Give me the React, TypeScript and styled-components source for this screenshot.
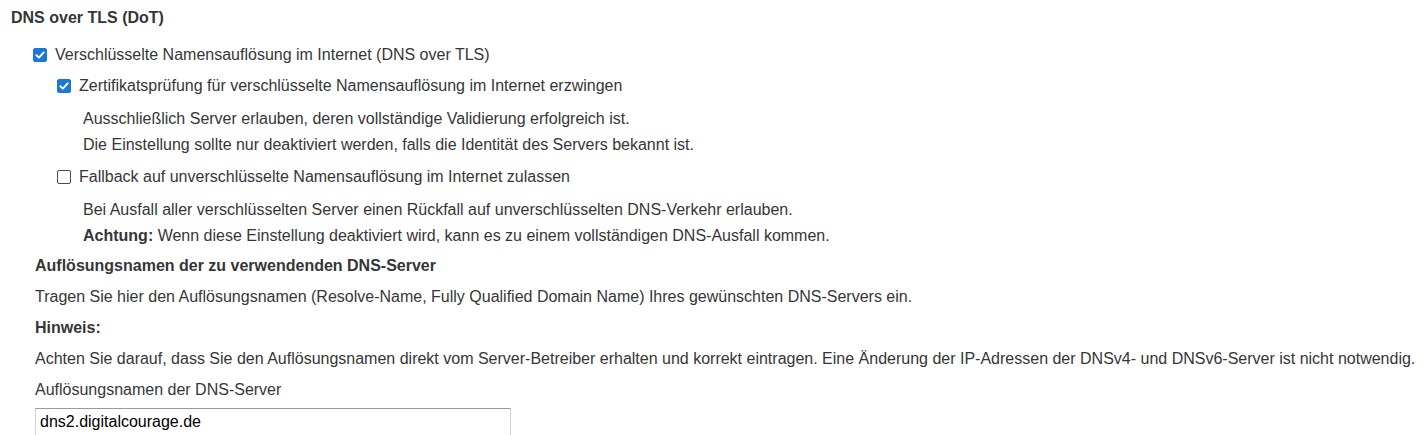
import React, { useState } from "react";
import styled, { createGlobalStyle } from "styled-components";

const GlobalStyle = createGlobalStyle`
  html, body {
    margin: 0;
    padding: 0;
    background: #ffffff;
  }

  body {
    font-family: "Liberation Sans", Arial, sans-serif;
    font-size: 16px;
    color: #363636;
  }
`;

const Page = styled.div`
  box-sizing: border-box;
  width: 1426px;
  height: 435px;
  overflow: hidden;
  padding: 9px 0 0 11px;
`;

const SectionTitle = styled.h3`
  margin: 0 0 15px;

  font-size: 16px;
  font-weight: bold;
  line-height: 18px;
`;

const Block = styled.div<{ $indent?: number }>`
  display: flex;
  flex-direction: column;
  padding-left: ${({ $indent = 0 }) => $indent}px;
`;

const CheckRow = styled.label`
  display: flex;
  align-items: center;
  gap: 8px;
  height: 26px;
  margin-bottom: 5px;

  cursor: pointer;
`;

const Box = styled.span<{ $checked: boolean }>`
  box-sizing: border-box;
  display: inline-flex;
  align-items: center;
  justify-content: center;
  width: 14px;
  height: 14px;
  flex-shrink: 0;

  border-radius: 2px;
  border: 1px solid ${({ $checked }) => ($checked ? "#1b78d6" : "#4a4a4a")};
  background: ${({ $checked }) => ($checked ? "#1b78d6" : "#ffffff")};
`;

const HiddenInput = styled.input`
  display: none;
`;

const Description = styled.div<{ $indent?: number }>`
  display: flex;
  flex-direction: column;
  padding-left: ${({ $indent = 0 }) => $indent}px;
  margin: 2px 0 6px;
`;

const Line = styled.p<{ $bold?: boolean }>`
  margin: 0;
  line-height: 26px;
  font-weight: ${({ $bold }) => ($bold ? "bold" : "normal")};
  white-space: nowrap;
`;

const Strong = styled.strong`
  font-weight: bold;
`;

const Subsection = styled.div`
  display: flex;
  flex-direction: column;
  gap: 5px;
  padding-left: 24px;
  margin-top: -2px;
`;

const FieldLabel = styled.label`
  line-height: 26px;
`;

const TextInput = styled.input`
  box-sizing: border-box;
  width: 476px;
  height: 32px;
  margin-top: 0;
  padding: 0 4px 4px;

  font-family: "Liberation Sans", Arial, sans-serif;
  font-size: 16px;
  color: #000000;

  border: 1px solid #d2d2d2;
  border-top-color: #9a9a9a;
  border-radius: 0;
  outline: none;
`;

function Check({ checked }: { checked: boolean }) {
  return (
    <Box $checked={checked}>
      {checked && (
        <svg width="10" height="10" viewBox="0 0 10 10" fill="none">
          <path d="M1.4 5.2 L3.9 7.6 L8.7 2.4" stroke="#ffffff" strokeWidth="1.9" strokeLinecap="round" strokeLinejoin="round" />
        </svg>
      )}
    </Box>
  );
}

function Option({ label, initial }: { label: string; initial: boolean }) {
  const [checked, setChecked] = useState(initial);
  return (
    <CheckRow>
      <HiddenInput type="checkbox" checked={checked} onChange={() => setChecked(!checked)} />
      <Check checked={checked} />
      <span>{label}</span>
    </CheckRow>
  );
}

export default function App() {
  const [server, setServer] = useState("dns2.digitalcourage.de");

  return (
    <>
      <GlobalStyle />
      <Page>
        <SectionTitle>DNS over TLS (DoT)</SectionTitle>

        <Block $indent={22}>
          <Option initial label="Verschlüsselte Namensauflösung im Internet (DNS over TLS)" />

          <Block $indent={24}>
            <Option initial label="Zertifikatsprüfung für verschlüsselte Namensauflösung im Internet erzwingen" />
            <Description $indent={26}>
              <Line>Ausschließlich Server erlauben, deren vollständige Validierung erfolgreich ist.</Line>
              <Line>Die Einstellung sollte nur deaktiviert werden, falls die Identität des Servers bekannt ist.</Line>
            </Description>

            <Option initial={false} label="Fallback auf unverschlüsselte Namensauflösung im Internet zulassen" />
            <Description $indent={26}>
              <Line>Bei Ausfall aller verschlüsselten Server einen Rückfall auf unverschlüsselten DNS-Verkehr erlauben.</Line>
              <Line>
                <Strong>Achtung:</Strong> Wenn diese Einstellung deaktiviert wird, kann es zu einem vollständigen DNS-Ausfall kommen.
              </Line>
            </Description>
          </Block>
        </Block>

        <Subsection>
          <Line $bold>Auflösungsnamen der zu verwendenden DNS-Server</Line>
          <Line>
            Tragen Sie hier den Auflösungsnamen (Resolve-Name, Fully Qualified Domain Name) Ihres gewünschten DNS-Servers ein.
          </Line>
          <Line $bold>Hinweis:</Line>
          <Line>
            Achten Sie darauf, dass Sie den Auflösungsnamen direkt vom Server-Betreiber erhalten und korrekt eintragen. Eine Änderung der IP-Adressen der DNSv4- und DNSv6-Server ist nicht notwendig.
          </Line>
          <FieldLabel htmlFor="dot-server">Auflösungsnamen der DNS-Server</FieldLabel>
          <TextInput id="dot-server" value={server} onChange={(e) => setServer(e.target.value)} />
        </Subsection>
      </Page>
    </>
  );
}
